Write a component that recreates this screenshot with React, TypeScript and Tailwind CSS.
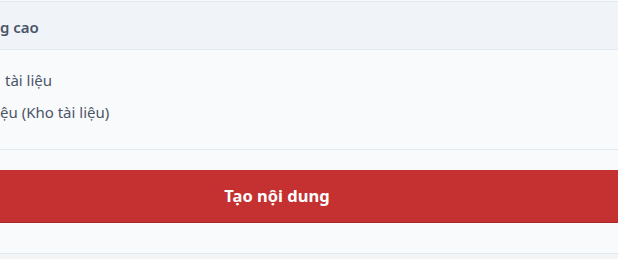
export default function App() {
  return (
    <div className="w-[618px] h-[259px] overflow-hidden bg-[#f3f4f6]" style={{ fontFamily: '"Segoe UI", "Noto Sans", sans-serif' }}>
      <div className="h-px bg-[#f9fafb]" />
      {/* Advanced options (panel continues off the left edge) */}
      <section className="bg-[#f9fafc]">
        <div className="h-[49px] border-y border-[#e2e8f0] bg-[#f0f3f8] flex items-center pt-[3px]">
          <span className="text-[15px] font-semibold text-[#4a5568] whitespace-nowrap">g cao</span>
        </div>
        <div className="h-[100px] border-b border-[#e2e8f0] pt-[18px] flex flex-col gap-[8px]">
          <div className="pl-[5px] text-[15px] text-[#4a5568] whitespace-nowrap leading-6">tài liệu</div>
          <div className="text-[15px] text-[#4a5568] whitespace-nowrap leading-6">ệu (Kho tài liệu)</div>
        </div>
        <div className="pt-5 pb-[31px] border-b border-[#e2e8f0]">
          <button className="ml-[-64px] w-[682px] h-[52px] bg-[#c53030] text-white text-[16.5px] font-bold shadow-[0_1px_0_#a82828]">
            Tạo nội dung
          </button>
        </div>
      </section>
    </div>
  );
}
